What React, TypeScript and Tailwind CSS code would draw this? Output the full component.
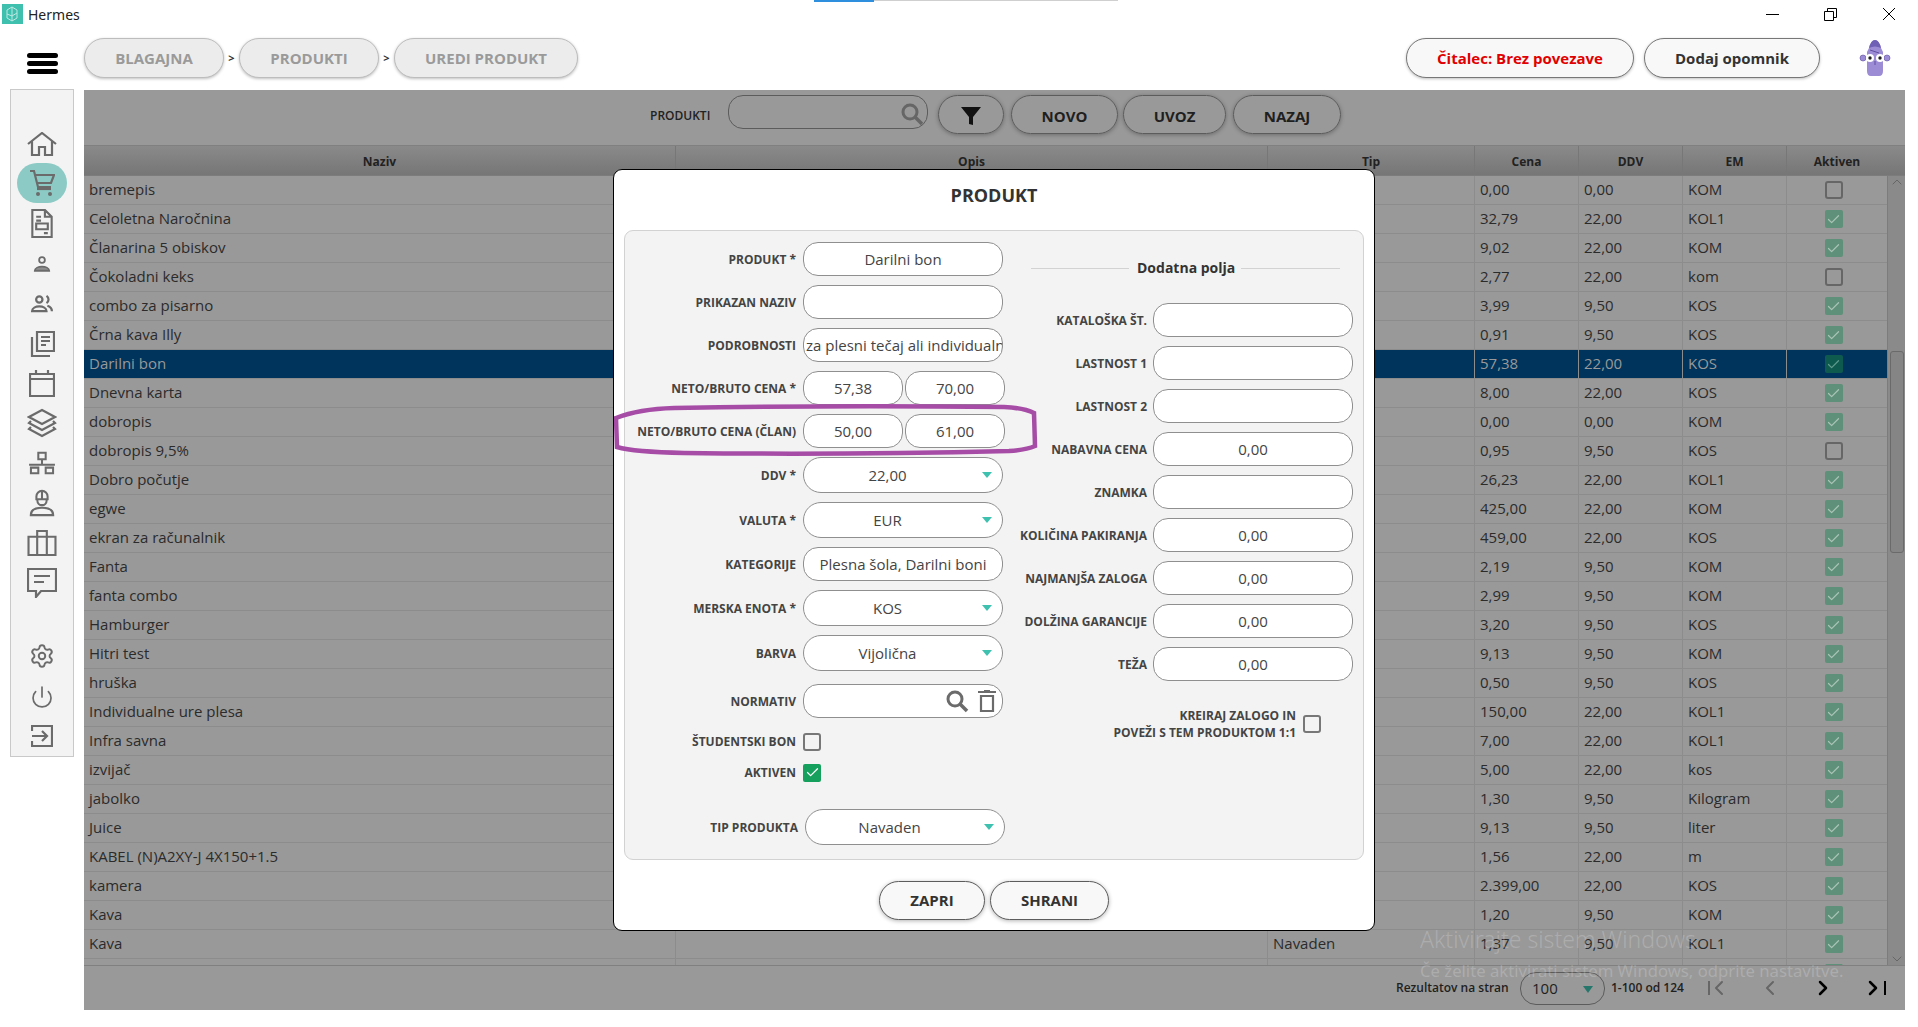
import { Check, ChevronDown, ChevronLeft, ChevronRight, ChevronUp, Power, Settings } from "lucide-react";

const rows = [
  ["bremepis", "0,00", "0,00", "KOM", 0],
  ["Celoletna Naročnina", "32,79", "22,00", "KOL1", 1],
  ["Članarina 5 obiskov", "9,02", "22,00", "KOM", 1],
  ["Čokoladni keks", "2,77", "22,00", "kom", 0],
  ["combo za pisarno", "3,99", "9,50", "KOS", 1],
  ["Črna kava Illy", "0,91", "9,50", "KOS", 1],
  ["Darilni bon", "57,38", "22,00", "KOS", 1],
  ["Dnevna karta", "8,00", "22,00", "KOS", 1],
  ["dobropis", "0,00", "0,00", "KOM", 1],
  ["dobropis 9,5%", "0,95", "9,50", "KOS", 0],
  ["Dobro počutje", "26,23", "22,00", "KOL1", 1],
  ["egwe", "425,00", "22,00", "KOM", 1],
  ["ekran za računalnik", "459,00", "22,00", "KOS", 1],
  ["Fanta", "2,19", "9,50", "KOM", 1],
  ["fanta combo", "2,99", "9,50", "KOM", 1],
  ["Hamburger", "3,20", "9,50", "KOS", 1],
  ["Hitri test", "9,13", "9,50", "KOM", 1],
  ["hruška", "0,50", "9,50", "KOS", 1],
  ["Individualne ure plesa", "150,00", "22,00", "KOL1", 1],
  ["Infra savna", "7,00", "22,00", "KOL1", 1],
  ["izvijač", "5,00", "22,00", "kos", 1],
  ["jabolko", "1,30", "9,50", "Kilogram", 1],
  ["Juice", "9,13", "9,50", "liter", 1],
  ["KABEL (N)A2XY-J 4X150+1.5", "1,56", "22,00", "m", 1],
  ["kamera", "2.399,00", "22,00", "KOS", 1],
  ["Kava", "1,20", "9,50", "KOM", 1],
  ["Kava", "1,37", "9,50", "KOL1", 1],
  ["", "", "", "", 1],
] as const;

const cols = "grid grid-cols-[591px_592px_207px_104px_104px_104px_101px]";
const iconCls = "shrink-0 fill-none stroke-[#6b6b6b]";

const Pill = ({ className, children }: { className: string; children: React.ReactNode }) => (
  <div className={`flex h-10 items-center justify-center rounded-[20px] border text-[15px] font-bold shadow-[0_1px_3px_rgba(0,0,0,0.25)] ${className}`}>
    {children}
  </div>
);

const Box = ({ on, dim, sel }: { on?: boolean; dim?: boolean; sel?: boolean }) =>
  on ? (
    <span className={`flex h-[18px] w-[18px] shrink-0 items-center justify-center rounded-[2px] ${sel ? "bg-[#0e5a4f]" : dim ? "bg-[#5f9079]" : "bg-[#16a05d]"}`}>
      <Check size={15} strokeWidth={2} className={sel ? "text-[#5f9a8c]" : dim ? "text-[#a9c4b6]" : "text-white"} />
    </span>
  ) : (
    <span className={`block h-[18px] w-[18px] shrink-0 rounded-[3px] border-2 ${dim ? "border-[#666666]" : "border-[#777777]"}`} />
  );

const Field = ({ value, w = "w-[200px]", className = "" }: { value?: string; w?: string; className?: string }) => (
  <div className={`flex h-[34px] shrink-0 items-center overflow-hidden whitespace-nowrap rounded-[15px] border border-[#8f8f8f] bg-white text-[15px] text-[#444] ${className || "justify-center"} ${w}`}>
    {value}
  </div>
);

const Label = ({ children, w }: { children: React.ReactNode; w: string }) => (
  <div className={`flex shrink-0 justify-end whitespace-nowrap pt-[1px] text-[12px] font-bold text-[#444] ${w}`}>{children}</div>
);

const LeftRow = ({ label, children, className = "" }: { label: string; children: React.ReactNode; className?: string }) => (
  <div className={`flex items-center ${className}`}>
    <Label w="w-[171px]">{label}</Label>
    <div className="ml-[7px] flex gap-[2px]">{children}</div>
  </div>
);

const Select = ({ value }: { value: string }) => (
  <div className="relative flex h-9 w-[200px] items-center justify-center rounded-[18px] border border-[#8f8f8f] bg-white pr-[31px] text-[15px] text-[#444]">
    {value}
    <span className="absolute right-[10px] top-[14px] h-0 w-0 border-x-[5px] border-t-[6px] border-x-transparent border-t-[#3fc1b0]" />
  </div>
);

const RightRow = ({ label, value }: { label: string; value?: string }) => (
  <div className="flex items-center">
    <Label w="w-[116px]">{label}</Label>
    <div className="ml-[6px]">
      <Field value={value} />
    </div>
  </div>
);

const TopButton = ({ children, className }: { children: React.ReactNode; className: string }) => (
  <div className={`flex h-[39px] items-center justify-center rounded-[20px] border border-[#5c5c5c] text-[15px] font-bold text-[#1f1f1f] shadow-[0_1px_4px_rgba(0,0,0,0.3)] ${className}`}>
    {children}
  </div>
);

const Sidebar = () => (
  <aside className="ml-[10px] mt-[-1px] flex h-[668px] w-[64px] shrink-0 flex-col items-center border border-[#c9c9c9] bg-[#f3f3f3] pt-[42px]">
    <svg width="30" height="24" viewBox="0 0 30 24" className={iconCls} strokeWidth="2.2">
      <path d="M1 12 15 1l14 11M5 9v14h7v-8h6v8h7V9" />
    </svg>
    <div className="mt-[7px] flex h-10 w-[50px] shrink-0 items-center justify-center rounded-[20px] bg-[#8ccbc5]">
      <svg width="26" height="29" viewBox="0 0 26 29" className={iconCls} strokeWidth="2.2">
        <path d="M1 2h4l4 16h13M6 6h19l-3 8H8" />
        <circle cx="9" cy="25" r="2" fill="#6b6b6b" strokeWidth="0" />
        <circle cx="21" cy="25" r="2" fill="#6b6b6b" strokeWidth="0" />
        <path d="M8 20h14" />
      </svg>
    </div>
    <svg width="22" height="29" viewBox="0 0 22 30" className={`${iconCls} mt-[6px]`} strokeWidth="2.2">
      <path d="M1 1h13l7 7v21H1zM14 1v7h7M5 8h5M5 12h5M5 15h12v6H5zM13 25h4" />
    </svg>
    <svg width="18" height="18" viewBox="0 0 20 19" className={`${iconCls} mt-[17px]`} strokeWidth="2">
      <circle cx="10" cy="5" r="3.2" />
      <path d="M2 17c0-6 16-6 16 0z" className="fill-[#8f8f8f]" />
    </svg>
    <svg width="26" height="18" viewBox="0 0 26 20" className={`${iconCls} mt-[22px]`} strokeWidth="2.5">
      <circle cx="10" cy="5" r="3.5" />
      <path d="M18 1c3 2 3 6 0 8M2 18c0-7 16-7 16 0zM19 12c3 1 5 3 5 6" />
    </svg>
    <svg width="26" height="26" viewBox="0 0 26 26" className={`${iconCls} mt-[18px]`} strokeWidth="2.2">
      <path d="M8 1h17v19H8zM3 6v19h18M12 6h9M12 10h9M12 14h5" />
    </svg>
    <svg width="26" height="28" viewBox="0 0 26 28" className={`${iconCls} mt-[12px]`} strokeWidth="2.2">
      <path d="M1 5h24v22H1zM1 10h24M7 1v5M19 1v5" />
    </svg>
    <svg width="30" height="30" viewBox="0 0 30 30" className={`${iconCls} mt-[11px]`} strokeWidth="2.2">
      <path d="M15 2 28 9 15 16 2 9zM4 13l-2 2 13 7 13-7-2-2M4 19l-2 2 13 7 13-7-2-2" />
    </svg>
    <svg width="30" height="24" viewBox="0 0 30 26" className={`${iconCls} mt-[13px]`} strokeWidth="2.2">
      <path d="M11 2h8v7h-8zM15 9v6M1 15h28M3 18h8v6H3zM19 18h8v6h-8z" />
    </svg>
    <svg width="26" height="28" viewBox="0 0 26 30" className={`${iconCls} mt-[14px]`} strokeWidth="2.2">
      <path d="M7 11V8a6 6 0 0 1 12 0v3zM13 2v9M8 12c0 7 10 7 10 0M1 28c0-6 6-8 12-8s12 2 12 8z" />
    </svg>
    <svg width="30" height="26" viewBox="0 0 30 27" className={`${iconCls} mt-[13px]`} strokeWidth="2.2">
      <path d="M1 7h28v19H1zM10 7V1h10v6M10 7v19M20 7v19" />
    </svg>
    <svg width="30" height="30" viewBox="0 0 30 30" className={`${iconCls} mt-[12px]`} strokeWidth="2.2">
      <path d="M1 1h28v22H14l-5 6v-6H1zM7 8h16M7 14h10" />
    </svg>
    <Settings size={26} strokeWidth={1.8} className="mt-[45px] shrink-0 text-[#6b6b6b]" />
    <Power size={24} strokeWidth={1.7} className="mt-[16px] shrink-0 text-[#6b6b6b]" />
    <svg width="22" height="22" viewBox="0 0 22 22" className={`${iconCls} mt-[16px]`} strokeWidth="2.2">
      <path d="M1 6V1h20v20H1v-5M1 11h14M11 6l5 5-5 5" />
    </svg>
  </aside>
);

const Table = () => (
  <div className="relative flex-1 border-t border-[#808080]">
    <div className={`${cols} h-[30px] border-b border-[#7c7c7c] bg-gradient-to-b from-[#8a8a8a] to-[#767676] text-[12px] font-bold text-[#222]`}>
      {["Naziv", "Opis", "Tip", "Cena", "DDV", "EM", "Aktiven"].map((h, i) => (
        <div key={h} className={`flex items-center justify-center pt-[3px] ${i ? "border-l border-[#777]" : ""}`}>{h}</div>
      ))}
    </div>
    <div className="h-[789px] overflow-hidden">
      {rows.map((r, i) => {
        const selected = r[0] === "Darilni bon";
        return (
          <div key={i} className={`${cols} h-[29px] border-b border-[#8c8c8c] text-[15px] ${selected ? "bg-[#00345c] text-[#999]" : "text-[#2b2b2b]"}`}>
            <div className="flex items-center pb-[1px] pl-[5px]">{r[0]}</div>
            <div className="border-l border-[#8c8c8c]" />
            <div className="flex items-center border-l border-[#8c8c8c] pb-[1px] pl-[5px]">{i === 26 ? "Navaden" : ""}</div>
            <div className="flex items-center border-l border-[#8c8c8c] pb-[1px] pl-[5px]">{r[1]}</div>
            <div className="flex items-center border-l border-[#8c8c8c] pb-[1px] pl-[5px]">{r[2]}</div>
            <div className="flex items-center border-l border-[#8c8c8c] pb-[1px] pl-[5px]">{r[3]}</div>
            <div className="flex items-center justify-center border-l border-[#8c8c8c] pr-[7px]">
              <Box on={!!r[4]} dim sel={selected} />
            </div>
          </div>
        );
      })}
    </div>
    <div className="absolute bottom-0 right-0 top-[30px] flex w-[18px] flex-col items-center border-l border-[#7c7c7c] bg-[#8a8a8a] text-[#666]">
      <ChevronUp size={16} strokeWidth={1.5} className="mt-[-2px] shrink-0" />
      <div className="mt-[161px] h-[202px] w-[14px] shrink-0 rounded-[3px] border border-[#6a6a6a] bg-[#858585]" />
      <ChevronDown size={16} strokeWidth={1.5} className="mb-[-2px] mt-auto shrink-0" />
    </div>
  </div>
);

const Modal = () => (
  <div className="absolute left-[613px] top-[169px] flex h-[762px] w-[762px] flex-col rounded-[9px] border-[1.5px] border-black bg-white">
    <div className="pt-[14px] text-center text-[18px] font-bold leading-[23px] text-[#333]">PRODUKT</div>
    <div className="mx-[10px] mt-[23px] flex h-[630px] rounded-[9px] border border-[#d2d2d2] bg-[#f3f3f3] pt-[11px]">
      <div className="flex w-[390px] flex-col">
        <div className="flex flex-col gap-[9px]">
          <LeftRow label="PRODUKT *"><Field value="Darilni bon" /></LeftRow>
          <LeftRow label="PRIKAZAN NAZIV"><Field /></LeftRow>
          <LeftRow label="PODROBNOSTI">
            <Field value="za plesni tečaj ali individualno" className="justify-start pl-[2px]" />
          </LeftRow>
          <LeftRow label="NETO/BRUTO CENA *">
            <Field value="57,38" w="w-[100px]" />
            <Field value="70,00" w="w-[100px]" />
          </LeftRow>
          <LeftRow label="NETO/BRUTO CENA (ČLAN)">
            <Field value="50,00" w="w-[100px]" />
            <Field value="61,00" w="w-[100px]" />
          </LeftRow>
          <LeftRow label="DDV *"><Select value="22,00" /></LeftRow>
          <LeftRow label="VALUTA *"><Select value="EUR" /></LeftRow>
          <LeftRow label="KATEGORIJE"><Field value="Plesna šola, Darilni boni" /></LeftRow>
          <LeftRow label="MERSKA ENOTA *"><Select value="KOS" /></LeftRow>
          <LeftRow label="BARVA"><Select value="Vijolična" /></LeftRow>
        </div>
        <LeftRow label="NORMATIV" className="mt-[13px]">
          <div className="flex h-[34px] w-[200px] items-center justify-end gap-[9px] rounded-[15px] border border-[#8f8f8f] bg-white pr-[6px]">
            <svg width="23" height="23" viewBox="0 0 23 23" className="fill-none stroke-[#6b6b6b]">
              <circle cx="9" cy="9" r="7" strokeWidth="3" />
              <path d="m14 14 7 7" strokeWidth="3.5" />
            </svg>
            <svg width="18" height="22" viewBox="0 0 18 22" className="fill-none stroke-[#6b6b6b]">
              <path d="M0 2h18M6 1h6" strokeWidth="2" />
              <path d="M3 6h12v15H3z" strokeWidth="2.2" />
            </svg>
          </div>
        </LeftRow>
        <LeftRow label="ŠTUDENTSKI BON" className="mt-[14px]"><Box /></LeftRow>
        <LeftRow label="AKTIVEN" className="mt-[12px]"><Box on /></LeftRow>
        <div className="mt-[27px] flex items-center pl-[2px]">
          <Label w="w-[171px]">TIP PRODUKTA</Label>
          <div className="ml-[7px]"><Select value="Navaden" /></div>
        </div>
      </div>
      <div className="ml-[16px] flex w-[310px] flex-col">
        <div className="mt-[15px] flex items-center gap-[8px] text-[14px] font-bold leading-[22px] text-[#333]">
          <span className="h-px w-[98px] bg-[#d2d2d2]" />
          <span className="w-[96px] whitespace-nowrap text-center">Dodatna polja</span>
          <span className="h-px w-[99px] bg-[#d2d2d2]" />
        </div>
        <div className="mt-[24px] flex flex-col gap-[9px]">
          <RightRow label="KATALOŠKA ŠT." />
          <RightRow label="LASTNOST 1" />
          <RightRow label="LASTNOST 2" />
          <RightRow label="NABAVNA CENA" value="0,00" />
          <RightRow label="ZNAMKA" />
          <RightRow label="KOLIČINA PAKIRANJA" value="0,00" />
          <RightRow label="NAJMANJŠA ZALOGA" value="0,00" />
          <RightRow label="DOLŽINA GARANCIJE" value="0,00" />
          <RightRow label="TEŽA" value="0,00" />
        </div>
        <div className="mt-[26px] flex items-center">
          <div className="w-[265px] whitespace-nowrap text-right text-[12px] font-bold leading-[17px] text-[#444]">
            KREIRAJ ZALOGO IN
            <br />
            POVEŽI S TEM PRODUKTOM 1:1
          </div>
          <div className="ml-[7px]"><Box /></div>
        </div>
      </div>
    </div>
    <div className="mt-[21px] flex justify-center gap-[5px]">
      <TopButton className="w-[106px] bg-[#f8f8f8] text-[#333]">ZAPRI</TopButton>
      <TopButton className="w-[119px] bg-[#f8f8f8] text-[#333]">SHRANI</TopButton>
    </div>
    <svg width="426" height="56" viewBox="0 0 426 56" className="absolute left-0 top-[233px] fill-none stroke-[#a64ca6]" strokeWidth="4.5">
      <path d="M2 15Q25 6 60 5 220 2 390 4 410 5 420 10L421 43Q412 47 395 48 230 52 70 50 20 49 3 44Z" />
    </svg>
  </div>
);

export default function App() {
  return (
    <div className="relative h-[1027px] w-[1918px] overflow-hidden bg-white font-['Open_Sans',sans-serif] text-[#333]">
      <div className="flex h-[28px] items-center pl-[2px] text-[14px] text-[#222]">
        <svg width="21" height="20" viewBox="0 0 21 20" className="shrink-0">
          <rect width="21" height="20" fill="#3fbfae" />
          <path d="M10 3 5 6v8l5 3 5-3V6zM10 3v14M5 10l5 2 5-3" fill="none" stroke="#bfe9e3" strokeWidth="1" />
        </svg>
        <span className="ml-[5px] font-['Noto_Sans',sans-serif]">Hermes</span>
        <div className="ml-auto flex items-center gap-[45px] pr-[22px]">
          <span className="h-px w-[13px] bg-black" />
          <svg width="13" height="13" viewBox="0 0 13 13" className="fill-none stroke-black">
            <path d="M.5 3.5h9v9h-9zM3.5 3.5v-3h9v9h-3" />
          </svg>
          <svg width="14" height="14" viewBox="0 0 14 14" className="stroke-black">
            <path d="m1 1 12 12M13 1 1 13" />
          </svg>
        </div>
      </div>
      <div className="absolute left-[814px] top-0 h-[2px] w-[60px] bg-[#2f8fdf]" />
      <div className="absolute left-[874px] top-0 h-px w-[244px] bg-[#cfcfcf]" />

      <div className="flex h-[62px] items-center pb-[2px]">
        <div className="ml-[27px] mt-[11px] flex w-[31px] flex-col gap-[3px]">
          <span className="h-[5px] rounded-sm bg-black" />
          <span className="h-[5px] rounded-sm bg-black" />
          <span className="h-[5px] rounded-sm bg-black" />
        </div>
        <Pill className="ml-[26px] w-[140px] border-[#bdbdbd] bg-[#ececec] text-[#9a9a9a]">BLAGAJNA</Pill>
        <span className="w-[15px] text-center text-[11px] font-bold text-[#333]">&gt;</span>
        <Pill className="w-[140px] border-[#bdbdbd] bg-[#ececec] text-[#9a9a9a]">PRODUKTI</Pill>
        <span className="w-[15px] text-center text-[11px] font-bold text-[#333]">&gt;</span>
        <Pill className="w-[184px] border-[#bdbdbd] bg-[#ececec] text-[#9a9a9a]">UREDI PRODUKT</Pill>
        <Pill className="ml-auto w-[228px] border-[#777] bg-[#f8f8f8] text-[#e00000]">Čitalec: Brez povezave</Pill>
        <Pill className="ml-[10px] w-[176px] border-[#777] bg-[#f8f8f8] text-[#333]">Dodaj opomnik</Pill>
        <svg width="32" height="38" viewBox="0 0 32 38" className="ml-[39px] mr-[27px] shrink-0">
          <path d="M10 9Q12 1 16 1t6 8l2 4v19q0 5-4 5h-8q-4 0-4-5V13z" fill="#9c8cd6" />
          <path d="M10 9Q12 1 16 1t6 8q-6-3-12 0z" fill="#6f5fb5" />
          <circle cx="4" cy="19" r="3" fill="#9c8cd6" stroke="#5f4fa0" strokeWidth=".6" />
          <circle cx="28" cy="19" r="3" fill="#9c8cd6" stroke="#5f4fa0" strokeWidth=".6" />
          <circle cx="11" cy="19" r="4" fill="#fff" />
          <circle cx="21" cy="19" r="4" fill="#fff" />
          <circle cx="11" cy="19" r="1.7" fill="#222" />
          <circle cx="21" cy="19" r="1.7" fill="#222" />
          <path d="M11 11l9 3M16 22v4" stroke="#5f4fa0" fill="none" />
        </svg>
      </div>

      <div className="flex">
        <Sidebar />
        <main className="ml-[10px] flex h-[920px] w-[1821px] flex-col bg-[#999999]">
          <div className="flex h-[55px] shrink-0 items-start pl-[566px] pt-[5px]">
            <span className="w-[78px] pt-[12px] text-[12px] font-semibold text-[#222]">PRODUKTI</span>
            <div className="flex h-[34px] w-[200px] justify-end rounded-[15px] border border-[#5c5c5c] pr-[3px] pt-[7px]">
              <svg width="23" height="23" viewBox="0 0 23 23" className="fill-none stroke-[#666]">
                <circle cx="9" cy="9" r="7" strokeWidth="3" />
                <path d="m14 14 7 7" strokeWidth="3.5" />
              </svg>
            </div>
            <TopButton className="ml-[10px] w-[66px] pt-[2px]">
              <svg width="20" height="20" viewBox="0 0 20 20" fill="#111">
                <path d="M0 1h20L12 11v8l-4-1v-7z" />
              </svg>
            </TopButton>
            <TopButton className="ml-[7px] w-[107px] pt-[3px]">NOVO</TopButton>
            <TopButton className="ml-[5px] w-[103px] pt-[3px]">UVOZ</TopButton>
            <TopButton className="ml-[7px] w-[108px] pt-[3px]">NAZAJ</TopButton>
          </div>
          <Table />
          <div className="flex h-[45px] shrink-0 items-center border-t border-[#808080] pl-[1312px] text-[12px] font-semibold text-[#1f1f1f]">
            <span className="w-[124px] whitespace-nowrap">Rezultatov na stran</span>
            <div className="relative flex h-[33px] w-[85px] items-center rounded-[16px] border border-[#5c5c5c] pl-[11px] text-[15px] font-normal">
              100
              <span className="absolute right-[11px] top-[13px] h-0 w-0 border-x-[5px] border-t-[7px] border-x-transparent border-t-[#27766c]" />
            </div>
            <span className="ml-[6px] w-[85px] whitespace-nowrap">1-100 od 124</span>
            <div className="ml-[12px] flex h-4 items-center text-[#666]">
              <span className="mr-[-3px] h-[14px] w-[2px] bg-[#666]" />
              <ChevronLeft size={24} strokeWidth={2} />
            </div>
            <ChevronLeft size={24} strokeWidth={2} className="ml-[27px] text-[#666]" />
            <ChevronRight size={24} strokeWidth={2.5} className="ml-[29px] text-black" />
            <div className="ml-[26px] flex h-4 items-center text-black">
              <ChevronRight size={24} strokeWidth={2.5} />
              <span className="ml-[-1px] h-[14px] w-[2px] bg-black" />
            </div>
          </div>
        </main>
      </div>

      <Modal />

      <div className="absolute left-[1420px] top-[922px] whitespace-nowrap font-['Noto_Sans',sans-serif] text-[23px] font-light text-white/20">
        Aktivirajte sistem Windows
      </div>
      <div className="absolute left-[1420px] top-[958px] whitespace-nowrap font-['Noto_Sans',sans-serif] text-[16.7px] text-white/20">
        Če želite aktivirati sistem Windows, odprite nastavitve.
      </div>
    </div>
  );
}
